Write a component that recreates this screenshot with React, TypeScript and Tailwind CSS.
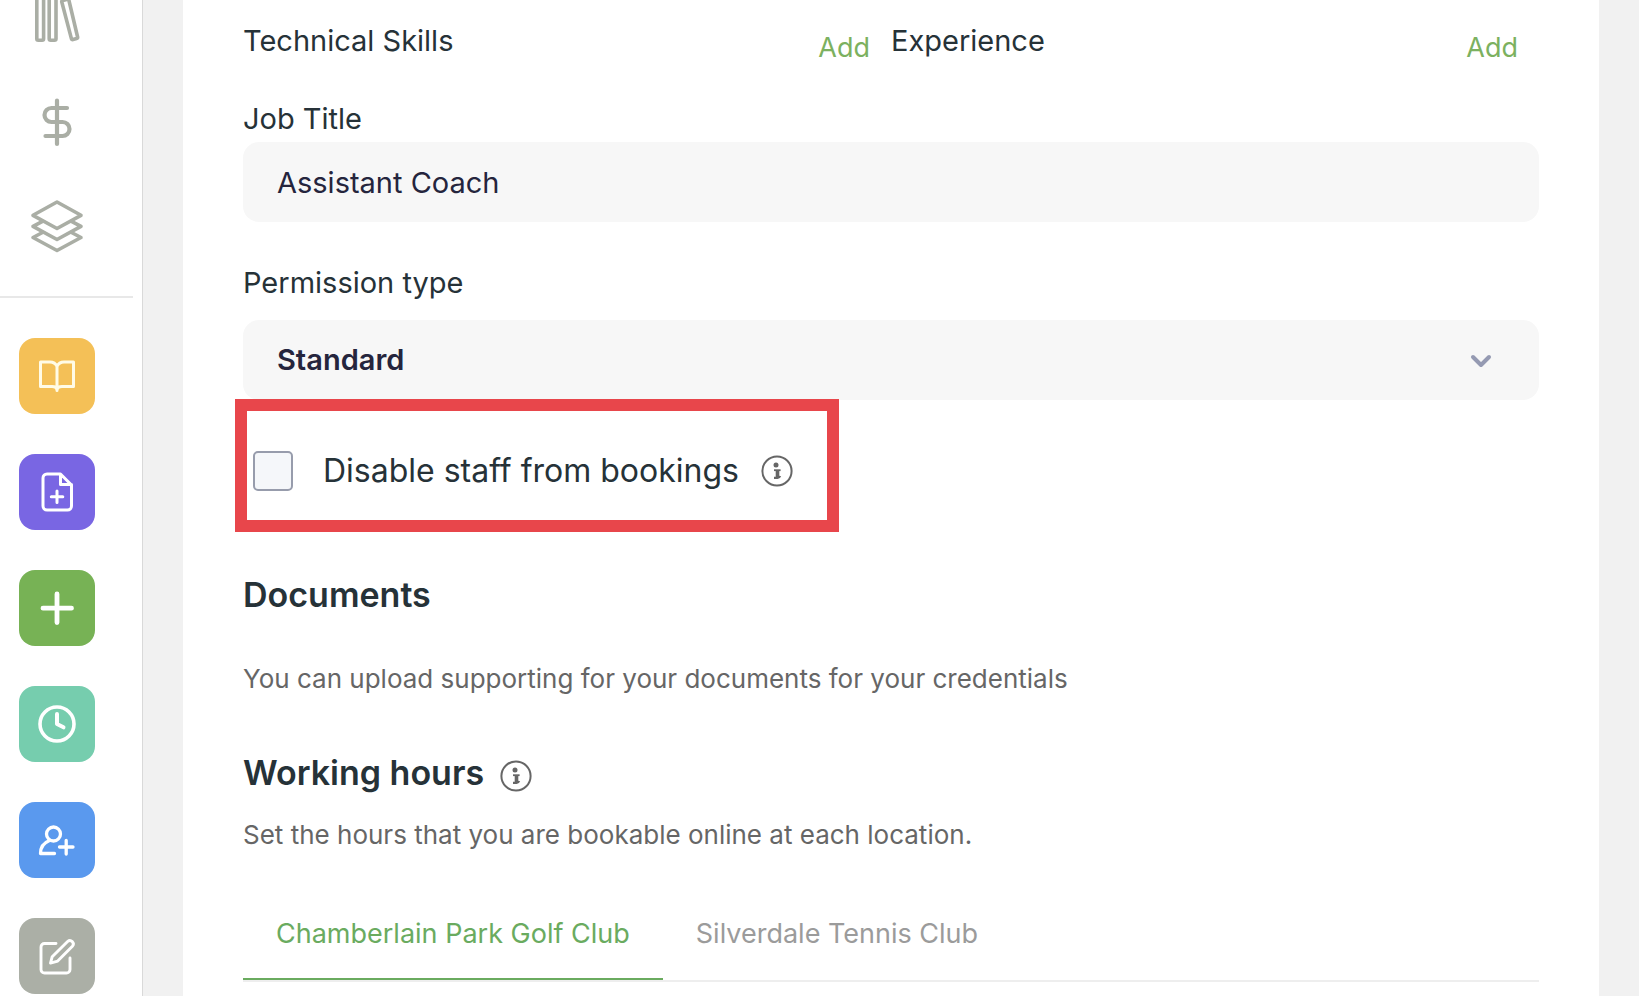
import type { ReactNode } from "react";

function Stroke({ children, width = 3 }: { children: ReactNode; width?: number }) {
  return (
    <svg
      viewBox="0 0 76 76"
      className="size-[76px] shrink-0"
      fill="none"
      stroke="currentColor"
      strokeWidth={width}
      strokeLinecap="round"
      strokeLinejoin="round"
      aria-hidden="true"
    >
      {children}
    </svg>
  );
}

function InfoIcon() {
  return (
    <svg viewBox="0 0 32 32" className="size-8" fill="none" stroke="#666" aria-hidden="true">
      <circle cx="16" cy="16" r="14.6" strokeWidth="2" />
      <circle cx="15" cy="10" r="2.5" fill="#666" stroke="none" />
      <path d="M13 15.2h6.6" strokeWidth="1.8" />
      <path d="M16.500 15v7" strokeWidth="3.600" />
      <path d="M13 22.800h3.500q2.200-.3 2.600-1.800" strokeWidth="2.200" />
    </svg>
  );
}

const navItems = [
  {
    label: "Library",
    art: (
      <Stroke width={3.6}>
        <rect x="17.8" y="14" width="6.8" height="46.3" rx="1.5" />
        <rect x="30.2" y="14" width="6.8" height="46.3" rx="1.5" />
        <path d="M43.8 20.5l4.600-1.200q1.200-.3 1.500.9l8.700 36.800q.3 1.300-1 1.600l-3.600 1q-1.300.3-1.600-1l-9.600-36.600q-.3-1.200 1-1.500z" />
      </Stroke>
    ),
  },
  {
    label: "Payments",
    art: (
      <Stroke width={4.2}>
        <path d="M38 16.5v43.5M48 24H32.500a7 7 0 0 0 0 14h11a7 7 0 0 1 0 14H26.500" />
      </Stroke>
    ),
  },
  {
    label: "Layers",
    art: (
      <Stroke width={3.6}>
        <path d="M38 14l24 13.300L38 40.500 14 27.300z" />
        <path d="M23.5 33.300L14 38.300 38 51.500l24-13.200-9.500-5" />
        <path d="M23.5 44.500L14 49.500 38 62.500l24-13-9.500-5" />
      </Stroke>
    ),
  },
];

const actions = [
  {
    label: "Open book",
    color: "bg-[#f4c057] text-[#fffbe6]",
    art: (
      <Stroke width={3}>
        <path d="M38 28.500q-2-4.500-7-4.500H21.500v24.500h11.500q4.500 0 5 3.500 .5-3.500 5-3.500h11.500V24h-9.500q-5 0-7 4.500zM38 28.500v24" />
      </Stroke>
    ),
  },
  {
    label: "New document",
    color: "bg-[#7966e3] text-white",
    art: (
      <Stroke width={3}>
        <path d="M41.500 20H28a4 4 0 0 0-4 4v28a4 4 0 0 0 4 4h20.500a4 4 0 0 0 4-4V31zM41.500 20v10.500h11M38 37v11.500M32.300 42.700h11.500" />
      </Stroke>
    ),
  },
  {
    label: "Add",
    color: "bg-[#77b255] text-white",
    art: (
      <Stroke width={4.8}>
        <path d="M38 24v28.500M24 38.200h28.500" />
      </Stroke>
    ),
  },
  {
    label: "Schedule",
    color: "bg-[#76cdae] text-white",
    art: (
      <Stroke width={3.6}>
        <circle cx="38" cy="38" r="17" />
        <path d="M38 28v10l6.500 3.300" strokeWidth="4" />
      </Stroke>
    ),
  },
  {
    label: "Add person",
    color: "bg-[#5a99ee] text-white",
    art: (
      <Stroke width={3.3}>
        <circle cx="34.5" cy="32" r="7" />
        <path d="M30.500 38.500Q21.500 42 21.500 51.500H35.500M47.200 38.500v13.500M40.500 45h13.500" />
      </Stroke>
    ),
  },
  {
    label: "Edit",
    color: "bg-[#abafa6] text-white",
    art: (
      <Stroke width={2.9}>
        <path d="M37 25.500H25.500a3.500 3.500 0 0 0-3.500 3.500v22.500a3.500 3.500 0 0 0 3.500 3.500h22a3.500 3.500 0 0 0 3.500-3.500V40" />
        <path d="M48.600 23.500a3.400 3.400 0 0 1 4.800 4.800L38.700 43.100l-7.200 2 1.700-6.400z" />
      </Stroke>
    ),
  },
];

export default function App() {
  return (
    <div className="flex h-screen overflow-hidden bg-[#f1f1f1] font-['Inter','Liberation_Sans',sans-serif] text-[#263238]">
      <aside className="flex w-[143px] shrink-0 flex-col border-r border-[#d9d9d9] bg-white">
        <nav className="-mt-5 flex flex-col gap-7 pb-8 pl-[19px] text-[#aaaea5]">
          {navItems.map((item) => (
            <a key={item.label} href="#" aria-label={item.label} className="block size-[76px]">
              {item.art}
            </a>
          ))}
        </nav>
        <hr className="mr-[9px] border-t-2 border-[#e8e8e8]" />
        <div className="flex flex-col gap-10 pt-10 pl-[19px]">
          {actions.map((item) => (
            <button
              key={item.label}
              type="button"
              aria-label={item.label}
              className={`size-[76px] rounded-2xl ${item.color}`}
            >
              {item.art}
            </button>
          ))}
        </div>
      </aside>

      <main className="mx-10 min-w-0 flex-1 bg-white px-[60px] pt-[23px]">
        <div className="grid grid-cols-2 leading-9">
          <section className="flex items-start justify-between pr-[21px]">
            <h3 className="text-[29px]">Technical Skills</h3>
            <button type="button" className="pt-[7px] text-[27px] text-[#7cb15f]">
              Add
            </button>
          </section>
          <section className="flex items-start justify-between pr-[21px]">
            <h3 className="text-[29px]">Experience</h3>
            <button type="button" className="pt-[7px] text-[27px] text-[#7cb15f]">
              Add
            </button>
          </section>
        </div>

        <div className="mt-[35px] flex flex-col gap-[5px]">
          <label htmlFor="job-title" className="text-[29px] leading-9">
            Job Title
          </label>
          <input
            id="job-title"
            type="text"
            defaultValue="Assistant Coach"
            className="h-20 w-full rounded-2xl bg-[#f7f7f7] px-[34px] text-[29px] text-[#25253d] outline-none"
          />
        </div>

        <div className="mt-[43px] flex flex-col gap-[19px]">
          <label htmlFor="permission" className="text-[29px] leading-9">
            Permission type
          </label>
          <div className="relative">
            <select
              id="permission"
              className="h-20 w-full appearance-none rounded-2xl bg-[#f7f7f7] px-[34px] text-[29px] font-semibold text-[#25253d] outline-none"
            >
              <option>Standard</option>
            </select>
            <svg
              viewBox="0 0 24 16"
              className="pointer-events-none absolute top-[33px] right-[46px] h-4 w-6"
              fill="none"
              stroke="#959ab2"
              strokeWidth="4"
              strokeLinecap="round"
              strokeLinejoin="round"
              aria-hidden="true"
            >
              <path d="M4 4l8 8 8-8" />
            </svg>
          </div>
        </div>

        <div className="relative -mt-px -ml-2 flex h-[133px] w-[604px] items-center border-12 border-[#e8464b] bg-white pt-2.5 pl-1.5">
          <input
            id="disable-bookings"
            type="checkbox"
            className="size-10 shrink-0 appearance-none rounded-[5px] border-2 border-[#979cac] bg-[#f5f7fa]"
          />
          <label htmlFor="disable-bookings" className="pl-[30px] text-[32px] leading-9 whitespace-nowrap">
            Disable staff from bookings
          </label>
          <button type="button" aria-label="About bookings" className="ml-[22px]">
            <InfoIcon />
          </button>
        </div>

        <h2 className="mt-[43px] text-[34px] leading-10 font-semibold">Documents</h2>
        <p className="mt-12 text-[26px] leading-8 text-[#666]">
          You can upload supporting for your documents for your credentials
        </p>

        <div className="mt-[58px] flex items-center gap-4">
          <h2 className="text-[34px] leading-10 font-semibold">Working hours</h2>
          <button type="button" aria-label="About working hours" className="pt-1.5">
            <InfoIcon />
          </button>
        </div>
        <p className="mt-[26px] text-[26px] leading-8 text-[#666]">
          Set the hours that you are bookable online at each location.
        </p>

        <div role="tablist" className="mt-[65px] flex border-b-2 border-[#eee] text-[27px] leading-9">
          <button
            type="button"
            role="tab"
            aria-selected="true"
            className="border-b-2 border-[#6aab5f] px-[33px] pb-[26px] text-[#6aab5f]"
          >
            Chamberlain Park Golf Club
          </button>
          <button type="button" role="tab" aria-selected="false" className="px-[33px] pb-7 text-[#9b9b9b]">
            Silverdale Tennis Club
          </button>
        </div>
      </main>
    </div>
  );
}
